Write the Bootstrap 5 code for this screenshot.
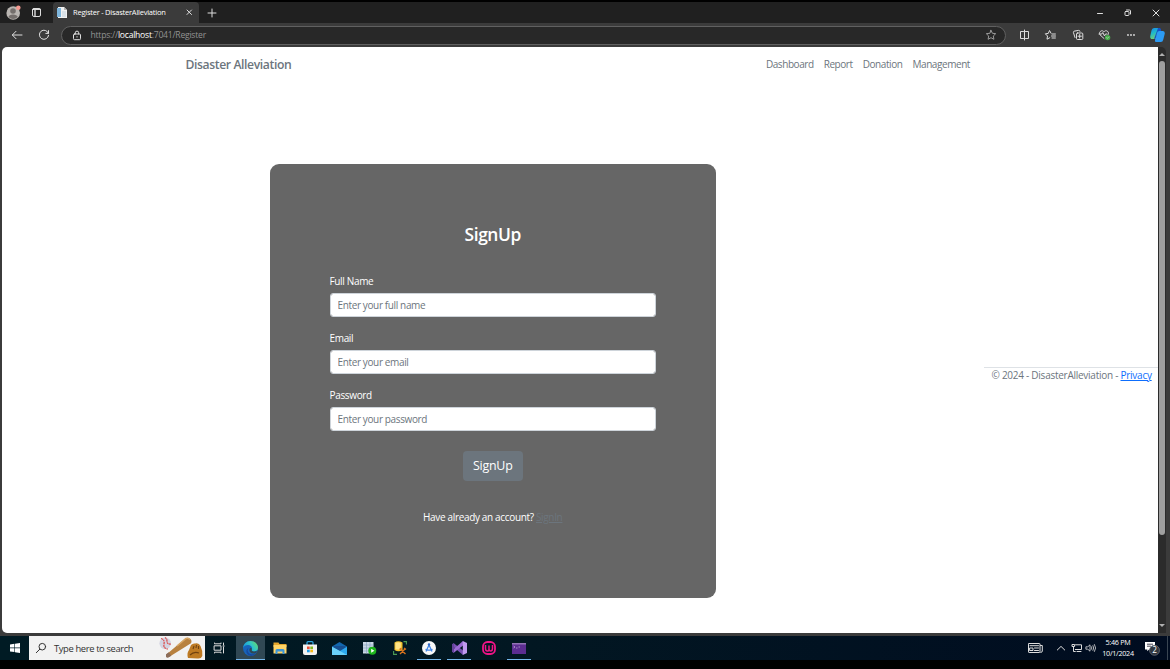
<!DOCTYPE html>
<html lang="en">
<head>
<meta charset="utf-8">
<title>Register - DisasterAlleviation</title>
<link href="https://cdn.jsdelivr.net/npm/bootstrap@5.3.0/dist/css/bootstrap.min.css" rel="stylesheet">
<style>
body{width:1170px;height:669px;background:#000;font-family:"Open Sans","Noto Sans",sans-serif;font-size:10px;line-height:15px;padding-top:2px}
svg{display:block;flex:none;overflow:visible}
.ln{fill:none;stroke:#dedede;stroke-width:1;stroke-linecap:round;stroke-linejoin:round}
.titlebar{height:21px;background:#202020}
.slot{display:flex;align-items:center;justify-content:center;flex:none;height:100%}
.tab-on{width:146px;height:21px;background:#3b3b3b;border-radius:4px 4px 0 0;color:#fff;font-size:7.5px;padding-left:4px}
.tab-on .cap{width:114px;margin-left:5px;letter-spacing:-.23px;white-space:nowrap}
.toolbar{height:24px;background:#3b3b3b}
.url{width:945px;height:19px;border:1px solid #606060;border-radius:10px;background:#282828;color:#929292;font-size:8.6px;letter-spacing:-.24px;padding:0 7px 0 6.5px}
.url b{font-weight:400;color:#fff}
.tools .slot{width:26.7px}
.tools{margin-right:-1px}
.frame{height:589px;background:#3b3b3b;padding:0 4px 3px 2px}
.view{width:1156.5px;background:#fff;border-radius:5px 0 0 5px;height:586px;color:#6c757d}
.scroller{width:8px;height:586px;background:#2b2b2b;border-radius:0 5px 0 0;padding:5px 0}
.thumb{width:6px;height:474px;border-radius:3px;background:#9f9f9f}
.topnav{height:35px;padding:0 188px 0 183.5px}
.brand{font-size:12.2px;font-weight:600;letter-spacing:-.4px}
.links{gap:10px;letter-spacing:-.43px}
.page-row{padding:82px 0 0 268px}
.panel{width:446px;height:434px;background:#666;border-radius:9px;color:#fff;padding:56px 60px 0 59.5px;letter-spacing:-.34px}
.panel h2{font-size:17.4px;line-height:28px;height:29px;font-weight:600;letter-spacing:-.4px}
.panel label{line-height:15px;height:19px;margin:0}
.panel .form-control{height:24px;min-height:0;padding:0 7px;font-size:10px;line-height:15px;letter-spacing:-.37px;border-radius:3px;border-color:#ced4da}
.panel .form-control::placeholder{color:#6c757d;opacity:1}
.spacer{height:25px}
.field{height:57.2px}
.btn-sign{width:60px;height:30px;background:#6c757d;color:#fff;font-size:12.4px;padding:1px 0 0;border-radius:4px;letter-spacing:-.2px}
.signin{color:#6c757d}
.foot{width:173.500px;height:19px;border-top:1px solid #dee2e6;margin-left:268px;margin-top:202.600px;padding-left:7.5px;white-space:nowrap;letter-spacing:-.26px}
.foot a{color:#0d6efd}
.taskbar{height:24px;background:linear-gradient(90deg,#001b24,#021722 45%,#000c20)}
.search{width:176px;background:#f2f2f2;color:#333;font-size:9.4px;letter-spacing:-.37px;padding-left:7px;height:24px}
.app{width:29.85px}
.app.run{background:linear-gradient(#76b9ed,#76b9ed) center bottom/24px 1px no-repeat}
.app.now{background:linear-gradient(#76b9ed,#76b9ed) center bottom/100% 1px no-repeat,#304854}
.clock{width:36px;color:#fff;font-size:7.2px;line-height:11px;text-align:center;letter-spacing:-.28px;white-space:nowrap}
</style>
</head>
<body class="overflow-hidden">
<header>
 <div class="titlebar d-flex align-items-center">
  <div class="slot" style="width:27px"><svg width="15" height="15"><circle cx="7.2" cy="8" r="6.8" fill="#b9b5b1"/><circle cx="7" cy="6" r="2.8" fill="#746f6c"/><path d="M2.5 12Q3 9.5 7 9.5T11.8 12Q7 16 2.5 12" fill="#746f6c"/><circle cx="12.3" cy="2.8" r="2.3" fill="#f49a91"/></svg></div>
  <div class="slot" style="width:26px;padding-right:7px"><svg width="9" height="9" class="ln"><rect x=".5" y=".5" width="8" height="8" rx="1.5"/><path d="M.7 1.4h7.6M3 2v6.5" stroke-width="1.4"/></svg></div>
  <div class="tab-on d-flex align-items-center">
   <svg width="11" height="11"><path d="M1 0h6l3 3v8H1z" fill="#f1f1f1"/><path d="M0 1h4v9H0z" fill="#7eb6dd"/><path d="M7 0v3h3" fill="#b5b5b5"/><path d="M5 5h4M5 7h4M5 9h4" stroke="#b7cbd9" stroke-width=".8"/></svg>
   <span class="cap">Register - DisasterAlleviation</span>
   <svg width="5" height="5" class="ln"><path d="M0 0l4.5 4.5M4.5 0L0 4.5"/></svg>
  </div>
  <div class="slot" style="width:26px"><svg width="8" height="8" class="ln"><path d="M4 0v8M0 4h8"/></svg></div>
  <div class="ms-auto d-flex h-100">
   <div class="slot" style="width:28px"><svg width="6" height="6" class="ln"><path d="M.5 3.500h5"/></svg></div>
   <div class="slot" style="width:28px"><svg width="6" height="6" class="ln"><rect x="0" y="1.5" width="4" height="4" rx=".7"/><path d="M1.5 0H4.5Q5.5 0 5.5 1v3"/></svg></div>
   <div class="slot" style="width:28px"><svg width="6" height="6" class="ln"><path d="M0 0l6 6M6 0L0 6"/></svg></div>
  </div>
 </div>
 <div class="toolbar d-flex align-items-center">
  <div class="slot" style="width:34px"><svg width="10" height="8" class="ln"><path d="M10 4H.5M4 .3L.3 4 4 7.7"/></svg></div>
  <div class="slot" style="width:27px;padding-right:7px"><svg width="10" height="10" class="ln"><path d="M9.4 3.3A4.6 4.6 0 1 0 9.6 5.3M9.5.6v2.8H6.8"/></svg></div>
  <div class="url d-flex align-items-center">
   <div class="slot" style="width:17px"><svg width="8" height="9" class="ln"><rect x=".5" y="3" width="7" height="5.7" rx="1"/><path d="M2.3 3V1.8a1.7 1.7 0 0 1 3.4 0V3M4 5.6v.5"/></svg></div>
   <span style="margin-left:5px">https://<b>localhost</b>:7041/Register</span>
   <div class="ms-auto slot" style="width:15px"><svg width="10" height="10" class="ln" style="stroke:#9b9b9b"><path d="M5 .3l1.4 3 3.3.4-2.4 2.3.6 3.3L5 7.7 2.1 9.3 2.7 6 .3 3.7l3.3-.4z"/></svg></div>
  </div>
  <div class="tools ms-auto d-flex h-100">
   <div class="slot"><svg width="9" height="10" class="ln"><path d="M3.500 1.500H.5v7h3M5.500 1.500h3v7h-3M4.500 0v10"/></svg></div>
   <div class="slot"><svg width="11" height="10" class="ln"><path d="M6 3.200L4.500 .5 3.300 3.400.3 3.800 2.500 6 2 9.200l2.800-1.500M7 4h3.400M6.500 6h4M7 8h3.400"/></svg></div>
   <div class="slot"><svg width="10" height="10" class="ln"><rect x="3.500" y="3" width="6.300" height="6.500" rx="1"/><path d="M5 6.200h3.400M6.700 4.500V8M2 7.500L.4 2.400Q.3 1.500 1 1.200L5.500.4Q6.800.3 7 1.300"/></svg></div>
   <div class="slot"><svg width="11" height="10" class="ln"><path d="M5 8.500L1 4.800C-.8 2 3-.9 5 1.800 7-.9 10.900 2 9.200 4.500M0 4h2.800l1-1.500L5.500 6l1-2H8"/><circle cx="8.600" cy="7.600" r="2.700" fill="#47ae4a" stroke="none"/><path d="M7.500 7.600l.8.8L9.700 7" stroke-width=".6"/></svg></div>
   <div class="slot"><svg width="8" height="2" fill="#dedede"><circle cx="1" cy="1" r=".9"/><circle cx="4" cy="1" r=".9"/><circle cx="7" cy="1" r=".9"/></svg></div>
   <div class="slot"><svg width="15" height="14"><defs><linearGradient id="cp" x2=".4" y2="1"><stop stop-color="#1688ee"/><stop offset=".5" stop-color="#20bac9"/><stop offset="1" stop-color="#72cf70"/></linearGradient></defs><path d="M4 0h5q1.500 0 1 2L8.200 9Q7.700 11 5.800 11H2Q0 11 .2 8.200L1.500 2.500Q2 0 4 0" fill="url(#cp)"/><path d="M9.300 3H13q2 0 1.800 2.500l-1.500 6Q12.800 14 10.800 14H6q-1.600 0-1-2l2-7Q7.500 3 9.300 3" fill="#2c9bf4"/><path d="M8 0h1.500q1 0 1.300 1l.5 2H9.300Q7.500 3 7 5l-1.200 5Q5.500 11 4 11z" fill="#1551c7"/></svg></div>
  </div>
 </div>
</header>

<div class="frame d-flex">
 <main class="view">
  <nav class="topnav d-flex align-items-center justify-content-between">
   <span class="brand">Disaster Alleviation</span>
   <div class="links d-flex"><span>Dashboard</span><span>Report</span><span>Donation</span><span>Management</span></div>
  </nav>
  <div class="page-row d-flex">
   <form class="panel flex-shrink-0">
    <h2 class="text-center mb-0">SignUp</h2>
    <div class="spacer"></div>
    <div class="field"><label class="d-block">Full Name</label><input class="form-control" placeholder="Enter your full name"></div>
    <div class="field"><label class="d-block">Email</label><input class="form-control" placeholder="Enter your email"></div>
    <div class="field"><label class="d-block">Password</label><input class="form-control" placeholder="Enter your password"></div>
    <div class="d-flex justify-content-center" style="padding-top:5px"><button type="button" class="btn btn-sign">SignUp</button></div>
    <div class="text-center" style="padding-top:29px">Have already an account? <a class="signin" href="#">SignIn</a></div>
   </form>
   <footer class="foot">© 2024 - DisasterAlleviation - <a href="#">Privacy</a></footer>
  </div>
 </main>
 <div class="scroller d-flex flex-column align-items-center">
  <svg width="6" height="4"><path d="M0 4L3 1l3 3z" fill="#b0b0b0"/></svg>
  <div class="thumb" style="margin-top:5px"></div>
  <svg width="6" height="4" class="mt-auto"><path d="M0 0l3 3 3-3z" fill="#b0b0b0"/></svg>
 </div>
</div>

<div class="taskbar d-flex align-items-center">
 <div class="slot" style="width:29px"><svg width="10" height="10" fill="#fff"><path d="M0 1.4L4.4.8v3.8H0zM5 .7L10 0v4.6H5zM0 5.2h4.4V9L0 8.4zM5 5.2h5V10l-5-.8z"/></svg></div>
 <div class="search d-flex align-items-center">
  <svg width="10" height="10" class="ln" style="stroke:#333"><circle cx="6.3" cy="3.7" r="3.3"/><path d="M3.8 6.2L.3 9.7"/></svg>
  <span style="margin-left:8px;width:105px">Type here to search</span>
  <svg width="44" height="22"><circle cx="6.200" cy="6.300" r="5.800" fill="#d3d4e2"/><path d="M2 1.500q4 1 3 5.500t4 5M6 .5q2 1 2 4t4 2.500" fill="none" stroke="#dd4a4a" stroke-width="1.200" stroke-dasharray="2 .6"/><path d="M8 17L26.500 1.200q2.600-1.200 4.700.6t.8 4.500L10 20z" fill="#b8813f"/><path d="M18 9L27 1.500q2.600-.8 4 1.100" fill="none" stroke="#d7a665" stroke-width="1.500"/><path d="M7 17.200l2.800-2 2.500 3.500L9 20.800q-1.500.2-2-1z" fill="#8c6d59"/><path d="M29 21q-1.500-5 1-8l2-5q2-2 4-1.500 4-1 5.500 2.500 2.500 5 1.800 10-1 3-5 2.500z" fill="#bd7a23"/><path d="M34 12l1-3M37 11l.5-3M39.500 12V9M31 18q4-4 9-2" fill="none" stroke="#704210" stroke-width="1.100"/></svg>
 </div>
 <div class="slot" style="width:30.5px;padding-right:2px"><svg width="11" height="10" class="ln"><rect x=".5" y="2.800" width="6.500" height="4.400"/><path d="M.5 0v.8H7V0M.5 10v-.8H7V10M9.500 0v2M9.500 4v6M9 3h1.200"/></svg></div>
 <div class="slot app now"><svg width="15" height="15"><defs><linearGradient id="eg" y1=".5"><stop stop-color="#1797dc"/><stop offset=".5" stop-color="#30c5c7"/><stop offset="1" stop-color="#72df55"/></linearGradient></defs><circle cx="7.500" cy="7.500" r="7.500" fill="#1764bb"/><path d="M.1 7C.4 3 3.400 0 7.500 0 12 0 15 3 15 6.700c0 2.800-2.200 3.900-4.500 3.700-1.800-.1-2.500-1-1.700-2C9.700 6.200 7.900 4 5 4 2.700 4 .8 5.200.1 7" fill="url(#eg)"/><path d="M5.800 6.500Q3.500 9.500 6 12.200 8.600 14.400 13 12.300 9 17 4.600 13.500 1.500 9 5.800 6.500" fill="#174a9c"/><path d="M8.900 8q-1 2 1.600 2.400 1.800.2 3.500-.7l-1 2.200q-4 1.600-6-1Q5.800 8.800 7 7q1.600-.4 1.900 1" fill="#304854"/></svg></div>
 <div class="slot app"><svg width="14" height="12"><path d="M.5.5h5l1 1.500h7V5H.5z" fill="#e5a62c"/><path d="M.5 3h13v8.500H.5z" fill="#ffd568"/><path d="M2.500 12V8.500q0-1.500 1.500-1.500h6q1.500 0 1.500 1.500V12H9.500V9.500h-5V12z" fill="#3b94d6"/></svg></div>
 <div class="slot app"><svg width="14" height="14"><path d="M4 4V1.500Q4 .6 5 .6h4q1 0 1 .9V4" fill="none" stroke="#2ea8e4" stroke-width="1.200"/><path d="M0 3.500h14V12q0 2-2 2H2q-2 0-2-2z" fill="#f2f2f2"/><path d="M4 5.500h2.700v2.600H4z" fill="#eb5036"/><path d="M7.300 5.500H10v2.600H7.300z" fill="#82b920"/><path d="M4 8.700h2.700v2.600H4z" fill="#1c9ce8"/><path d="M7.300 8.700H10v2.600H7.300z" fill="#f6b916"/></svg></div>
 <div class="slot app"><svg width="15" height="13"><path d="M0 4.500L7.500 0 15 4.500V13H0z" fill="#1266ae"/><path d="M1.500 4h12v5h-12z" fill="#164f91"/><path d="M0 4.800l7.500 4.500L15 4.800V13H0z" fill="#2da9ed"/><path d="M0 4.800l8 4.200L15 13H0z" fill="#69d0f8"/></svg></div>
 <div class="slot app"><svg width="14" height="13"><path d="M0 0h10.500v11.500H0z" fill="#cbd8e5"/><path d="M0 3h10.500M0 6h10.500M0 9h10.500M3.500 0v11.500M7 0v11.500" stroke="#829fc0" stroke-width=".6"/><circle cx="9.300" cy="8.800" r="4" fill="#1eb51d"/><path d="M8.200 6.800v4l3.200-2z" fill="#fff"/></svg></div>
 <div class="slot app"><svg width="14" height="14"><path d="M1.500 1.500q3.500-2.500 8 0V9q-4 2.500-8 0z" fill="#f4c32f"/><path d="M2.500 1.800Q5 .5 7.800 1.800V8q-3 1-5.300 0z" fill="#ffe487"/><path d="M10.500.6H13.400V3.500M.6 10v3.400H4" fill="none" stroke="#4d9b55" stroke-width="1.100"/><path d="M7 8l5.500 5M12.500 7.500L7 13M6.500 8.500l2-1.500M11 7l2 1.500" stroke="#d8731e" stroke-width="1.400"/></svg></div>
 <div class="slot app run"><svg width="14" height="14"><circle cx="7" cy="7" r="7" fill="#f8f8f8"/><path d="M4 10.500L7 4l3 6.500M3.500 8.300q3.500 1.500 7 0" fill="none" stroke="#4186e8" stroke-width="1.300"/><circle cx="7" cy="3.500" r="1.200" fill="#3169c6"/></svg></div>
 <div class="slot app run"><svg width="15" height="14"><path d="M0 3.200l1.800-.9L11 9.500V14L.2 5z" fill="#7950b5"/><path d="M0 10.800l1.800.9L11 4.500V0L0 9.500z" fill="#9b6bd4"/><path d="M0 3.200V10.800l2 .9V2.300z" fill="#65439b"/><path d="M10.800 0L15 2v10l-4.200 2z" fill="#c09aef"/></svg></div>
 <div class="slot app"><svg width="14" height="14" fill="none" stroke="#f01487"><rect x="1" y="1" width="12" height="12" rx="4.500" stroke-width="1.800"/><path d="M3.500 4v3.500Q3.500 10 5.300 10T7 7.800V4.500M7 8q0 2 1.700 2t1.800-2.500V4" stroke-width="1.500"/></svg></div>
 <div class="slot app run"><svg width="14" height="11"><path d="M0 0h14v11H0z" fill="#5c2d91"/><path d="M0 0h14v1.500H0z" fill="#9273b5"/><path d="M1.500 3l1.500 1-1.500 1M4 5h1.500M6.500 4h1.500" fill="none" stroke="#d8c6eb" stroke-width=".6"/></svg></div>
 <div class="ms-auto d-flex align-items-center h-100">
  <div class="slot" style="width:30px"><svg width="15" height="10" class="ln"><rect x=".5" y=".5" width="11.500" height="9" rx=".6"/><path d="M12.500 2.500h1.800v5.500q-.1 1.500-1.500 1.500M2 2.700h8.500M2 5h3v2.500H2zM6.500 5h4M6.500 7.500h4"/></svg></div>
  <div class="slot" style="width:22px"><svg width="8" height="4" class="ln"><path d="M.3 4L4 .4 7.700 4"/></svg></div>
  <div class="slot" style="width:9px"><svg width="10" height="8" class="ln"><path d="M3.500.8h6v4.700h-6.200M5 7.500h4M.4.500h2.200v2H.4zM1.500 2.500v5h1.800"/></svg></div>
  <div class="slot" style="width:19px"><svg width="10" height="8" class="ln" style="stroke-width:.8"><path d="M.3 2.800h1.500L4 .8v6.400L1.800 5.200H.3zM5.500 2.700q.8 1.200 0 2.600M7 1.600q1.500 2.400 0 4.800M8.500.5q2.400 3.500 0 7"/></svg></div>
  <div class="clock"><div>5:46 PM</div><div>10/1/2024</div></div>
  <div class="slot" style="width:31px"><svg width="14" height="14"><path d="M0 1h10v7.500H4L2.300 10.300V8.500H0z" fill="#fff"/><path d="M2 3.200h6M2 5.200h4" stroke="#445"/><circle cx="9.500" cy="9.300" r="5" fill="#30363e" stroke="#747980" stroke-width=".7"/><text x="9.500" y="12.200" text-anchor="middle" font-size="8.200" fill="#fff">2</text></svg></div>
  <div class="h-100" style="width:3px;border-left:1px solid #394552"></div>
 </div>
</div>
<script src="https://cdn.jsdelivr.net/npm/bootstrap@5.3.0/dist/js/bootstrap.bundle.min.js"></script>
</body>
</html>
